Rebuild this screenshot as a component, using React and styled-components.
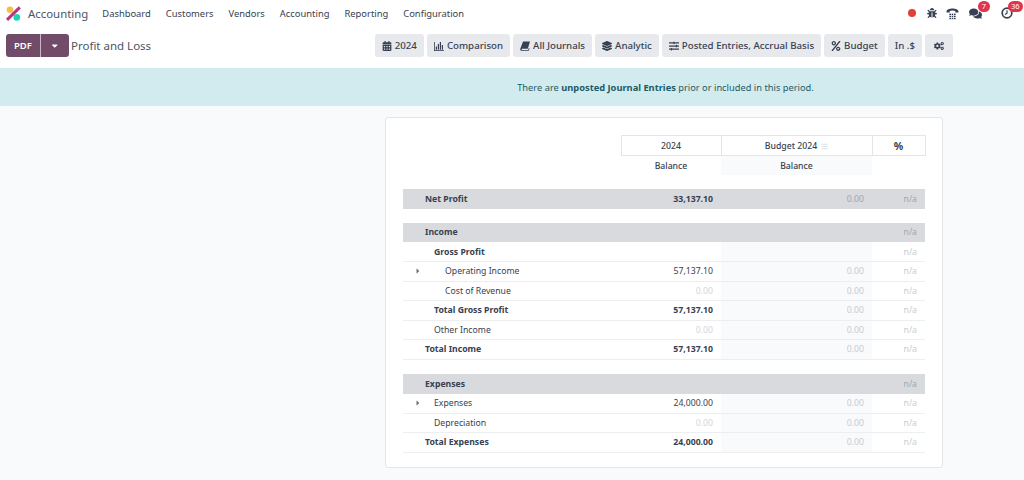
import React from 'react';
import styled, { createGlobalStyle } from 'styled-components';
import {
  FaBars,
  FaBug,
  FaCalendarAlt,
  FaCaretDown,
  FaCaretRight,
  FaCogs,
  FaComments,
  FaLayerGroup,
  FaPercent,
  FaSlidersH,
} from 'react-icons/fa';

const GlobalStyle = createGlobalStyle`
  html, body {
    margin: 0;
    padding: 0;
    height: 100%;
    overflow: hidden;
    background: #f9fafb;
    color: #374151;
    font-family: "Noto Sans", "Open Sans", sans-serif;
    font-size: 9px;
  }
`;

const Page = styled.div`
  width: 1024px;
  height: 480px;
  overflow: hidden;
  display: flex;
  flex-direction: column;
`;

const Navbar = styled.nav`
  height: 26px;
  padding-left: 6px;
  padding-right: 11px;
  background: #fff;
  display: flex;
  align-items: center;
`;

const AppName = styled.span`
  font-size: 11.4px;
  color: #4b5563;
  margin-left: 7px;
  margin-right: 14px;
`;

const Menu = styled.div`
  display: flex;
  gap: 15px;
  font-size: 9.4px;
  color: #374151;
`;

const Systray = styled.div`
  margin-left: auto;
  display: flex;
  align-items: center;
  color: #374151;
`;

const RecordDot = styled.span`
  width: 8px;
  height: 8px;
  border-radius: 50%;
  background: #e0403a;
  margin-right: 11px;
`;

const TrayIcon = styled.span`
  position: relative;
  display: flex;
  margin-right: ${(p) => p.$gap}px;
  font-size: ${(p) => p.$size}px;
`;

const Badge = styled.span`
  position: absolute;
  top: -6px;
  left: ${(p) => p.$left}px;
  min-width: 6px;
  height: 11px;
  padding: 0 3px;
  border-radius: 6px;
  background: #e0364c;
  color: #fff;
  font-size: 7.5px;
  line-height: 11px;
  text-align: center;
`;

const ControlPanel = styled.div`
  height: 42px;
  padding: 8px 71px 0 6px;
  box-sizing: border-box;
  background: #fff;
  display: flex;
  align-items: flex-start;
`;

const ButtonGroup = styled.div`
  display: flex;
  height: 23px;
  border-radius: 3px;
  overflow: hidden;
  background: #714b67;
  color: #fff;
  font-size: 9.5px;
  font-weight: 600;
`;

const GroupPart = styled.span`
  width: ${(p) => p.$width}px;
  display: flex;
  align-items: center;
  justify-content: center;
  border-left: ${(p) => (p.$divided ? '1px solid #c9b8c5' : 'none')};
`;

const PageTitle = styled.span`
  margin-left: 2px;
  font-size: 11.5px;
  line-height: 23px;
  color: #4b5563;
`;

const Filters = styled.div`
  margin-left: auto;
  display: flex;
  gap: 3px;
`;

const FilterButton = styled.button`
  height: 23px;
  min-width: ${(p) => (p.$iconOnly ? 28 : 0)}px;
  padding: 0 7px;
  border: 0;
  border-radius: 3px;
  background: #e7e9ed;
  color: #374151;
  display: flex;
  align-items: center;
  justify-content: center;
  gap: 3px;
  font-family: inherit;
  font-size: 9.7px;
  font-weight: 500;
  svg {
    font-size: 10px;
    flex: none;
  }
`;

const Notice = styled.div`
  height: 38px;
  flex: none;
  background: #d2ebef;
  color: #1f5a64;
  font-size: 9.3px;
  display: flex;
  align-items: center;
  justify-content: center;
  padding-left: 307px;
`;

const Content = styled.main`
  flex: 1;
  padding-top: 11px;
  padding-left: 385px;
`;

const Card = styled.section`
  width: 522px;
  height: 315px;
  padding: 17px;
  background: #fff;
  border: 1px solid #e3e5e8;
  border-radius: 3px;
`;

const Table = styled.table`
  width: 522px;
  table-layout: fixed;
  border-collapse: collapse;
  font-size: 8.7px;
`;

const HeadCell = styled.th`
  height: 19px;
  padding: 0;
  border: 1px solid #e3e5e8;
  font-weight: ${(p) => (p.$large ? 700 : 500)};
  text-align: center;
  font-size: ${(p) => (p.$large ? 10.5 : 8.7)}px;
  svg {
    margin-left: 4px;
    font-size: 7px;
    color: #dcdfe3;
    vertical-align: -1px;
  }
`;

const SubCell = styled.th`
  height: 19px;
  padding: 0;
  font-weight: 500;
  text-align: center;
  background: ${(p) => (p.$tinted ? '#f9fafb' : 'transparent')};
`;

const Gap = styled.tr`
  height: ${(p) => p.$height}px;
`;

const Row = styled.tr`
  height: 19.5px;
  background: ${(p) => (p.$section ? '#d8dadd' : 'transparent')};
  border-bottom: ${(p) => (p.$section ? 'none' : '1px solid #eceef0')};
  font-weight: ${(p) => (p.$strong ? 700 : 400)};
`;

const LabelCell = styled.td`
  padding: 0 0 0 ${(p) => p.$indent}px;
  position: relative;
  white-space: nowrap;
`;

const Caret = styled.span`
  position: absolute;
  left: 11px;
  top: 5px;
  display: flex;
  font-size: 8px;
  color: #6b7280;
`;

const AmountCell = styled.td`
  padding: 0 8px 0 0;
  text-align: right;
  color: ${(p) => (p.$muted ? '#d3d6da' : '#374151')};
`;

const BudgetCell = styled.td`
  padding: 0 8px 0 0;
  text-align: right;
  font-weight: 400;
  color: ${(p) => (p.$section ? '#a2a6ad' : '#c9ccd1')};
  background: ${(p) => (p.$section ? 'transparent' : '#f9fafb')};
`;

const PercentCell = styled.td`
  padding: 0 8px 0 0;
  text-align: right;
  font-weight: 400;
  color: ${(p) => (p.$section ? '#a2a6ad' : '#c9ccd1')};
`;

const Logo = () => (
  <svg width="15" height="15" viewBox="0 0 15 15">
    <circle cx="4" cy="3.8" r="3.3" fill="#fbb945" />
    <circle cx="10.8" cy="11.4" r="3.3" fill="#1ad3bb" />
    <path d="M1 13.8 L13.8 1.4" stroke="#b7357c" strokeWidth="3" />
  </svg>
);

const DeskPhone = () => (
  <svg width="13" height="13" viewBox="0 0 13 13" fill="currentColor">
    <path d="M0.5 4.5 C0.5 0.6 12.5 0.6 12.5 4.5 L12.5 5.6 L9.3 5.6 L9.3 3.9 C8 3.2 5 3.2 3.7 3.9 L3.7 5.6 L0.5 5.6 Z" />
    <rect x="3.4" y="6.6" width="1.6" height="1.4" />
    <rect x="5.7" y="6.6" width="1.6" height="1.4" />
    <rect x="8" y="6.6" width="1.6" height="1.4" />
    <rect x="3.4" y="8.7" width="1.6" height="1.4" />
    <rect x="5.7" y="8.7" width="1.6" height="1.4" />
    <rect x="8" y="8.7" width="1.6" height="1.4" />
    <rect x="3.4" y="10.8" width="1.6" height="1.4" />
    <rect x="5.7" y="10.8" width="1.6" height="1.4" />
    <rect x="8" y="10.8" width="1.6" height="1.4" />
  </svg>
);

const ActivityClock = () => (
  <svg width="12" height="12" viewBox="0 0 12 12" fill="none" stroke="currentColor" strokeWidth="1.7">
    <circle cx="6" cy="6" r="4.8" />
    <path d="M6 3.2 V6.2 L4 7.6" strokeWidth="1.2" />
  </svg>
);

const BarChartIcon = () => (
  <svg width="10" height="10" viewBox="0 0 10 10" fill="currentColor">
    <rect x="0" y="1" width="0.8" height="9" />
    <rect x="0" y="9.2" width="10" height="0.8" />
    <rect x="1.8" y="5.5" width="1.2" height="3.2" />
    <rect x="3.8" y="3" width="1.2" height="5.7" />
    <rect x="5.8" y="1" width="1.2" height="7.7" />
    <rect x="7.8" y="4" width="1.2" height="4.7" />
  </svg>
);

const SlantedBook = () => (
  <svg width="10" height="10" viewBox="0 0 10 10" fill="currentColor">
    <path d="M3 0.5 H10 L7.8 7.8 H2.2 C1.4 7.8 1.4 8.9 2.2 8.9 H8.2 L8.8 7 L9.6 7.4 L8.8 9.8 H2 C0.4 9.8 0 8.6 0.4 7.4 Z" />
  </svg>
);

const menuItems = ['Dashboard', 'Customers', 'Vendors', 'Accounting', 'Reporting', 'Configuration'];

const filters = [
  { icon: <FaCalendarAlt />, label: '2024' },
  { icon: <BarChartIcon />, label: 'Comparison' },
  { icon: <SlantedBook />, label: 'All Journals' },
  { icon: <FaLayerGroup />, label: 'Analytic' },
  { icon: <FaSlidersH />, label: 'Posted Entries, Accrual Basis' },
  { icon: <FaPercent />, label: 'Budget' },
  { label: 'In .$' },
  { icon: <FaCogs /> },
];

const sections = [
  {
    gap: 14,
    rows: [{ label: 'Net Profit', amount: '33,137.10', section: true, strong: true, indent: 22 }],
  },
  {
    gap: 14,
    rows: [
      { label: 'Income', section: true, strong: true, indent: 22, noBudget: true },
      { label: 'Gross Profit', strong: true, indent: 31, empty: true },
      { label: 'Operating Income', amount: '57,137.10', indent: 42, caret: true },
      { label: 'Cost of Revenue', amount: '0.00', indent: 42, muted: true },
      { label: 'Total Gross Profit', amount: '57,137.10', strong: true, indent: 31 },
      { label: 'Other Income', amount: '0.00', indent: 31, muted: true },
      { label: 'Total Income', amount: '57,137.10', strong: true, indent: 22 },
    ],
  },
  {
    gap: 15,
    rows: [
      { label: 'Expenses', section: true, strong: true, indent: 22, noBudget: true },
      { label: 'Expenses', amount: '24,000.00', indent: 31, caret: true },
      { label: 'Depreciation', amount: '0.00', indent: 31, muted: true },
      { label: 'Total Expenses', amount: '24,000.00', strong: true, indent: 22 },
    ],
  },
];

function ReportRow({ row }) {
  return (
    <Row $section={row.section} $strong={row.strong}>
      <LabelCell $indent={row.indent}>
        {row.caret && (
          <Caret>
            <FaCaretRight />
          </Caret>
        )}
        {row.label}
      </LabelCell>
      <AmountCell $muted={row.muted}>{row.amount}</AmountCell>
      <BudgetCell $section={row.section}>{row.noBudget || row.empty ? '' : '0.00'}</BudgetCell>
      <PercentCell $section={row.section}>n/a</PercentCell>
    </Row>
  );
}

export default function App() {
  return (
    <Page>
      <GlobalStyle />
      <Navbar>
        <Logo />
        <AppName>Accounting</AppName>
        <Menu>
          {menuItems.map((item) => (
            <span key={item}>{item}</span>
          ))}
        </Menu>
        <Systray>
          <RecordDot />
          <TrayIcon $size={10} $gap={9}>
            <FaBug />
          </TrayIcon>
          <TrayIcon $size={13} $gap={10}>
            <DeskPhone />
          </TrayIcon>
          <TrayIcon $size={13} $gap={19}>
            <FaComments />
            <Badge $left={9}>7</Badge>
          </TrayIcon>
          <TrayIcon $size={12} $gap={0}>
            <ActivityClock />
            <Badge $left={7}>36</Badge>
          </TrayIcon>
        </Systray>
      </Navbar>
      <ControlPanel>
        <ButtonGroup>
          <GroupPart $width={34}>PDF</GroupPart>
          <GroupPart $width={28} $divided>
            <FaCaretDown />
          </GroupPart>
        </ButtonGroup>
        <PageTitle>Profit and Loss</PageTitle>
        <Filters>
          {filters.map((filter, i) => (
            <FilterButton key={i} $iconOnly={!filter.label}>
              {filter.icon}
              {filter.label}
            </FilterButton>
          ))}
        </Filters>
      </ControlPanel>
      <Notice>
        <span>
          There are <b>unposted Journal Entries</b> prior or included in this period.
        </span>
      </Notice>
      <Content>
        <Card>
          <Table>
            <colgroup>
              <col width="218" />
              <col width="100" />
              <col width="151" />
              <col width="53" />
            </colgroup>
            <thead>
              <tr>
                <th />
                <HeadCell>2024</HeadCell>
                <HeadCell>
                  Budget 2024
                  <FaBars />
                </HeadCell>
                <HeadCell $large>%</HeadCell>
              </tr>
              <tr>
                <th />
                <SubCell>Balance</SubCell>
                <SubCell $tinted>Balance</SubCell>
                <th />
              </tr>
            </thead>
            <tbody>
              {sections.map((section, i) => (
                <React.Fragment key={i}>
                  <Gap $height={section.gap}>
                    <td colSpan={4} />
                  </Gap>
                  {section.rows.map((row, j) => (
                    <ReportRow key={j} row={row} />
                  ))}
                </React.Fragment>
              ))}
            </tbody>
          </Table>
        </Card>
      </Content>
    </Page>
  );
}
